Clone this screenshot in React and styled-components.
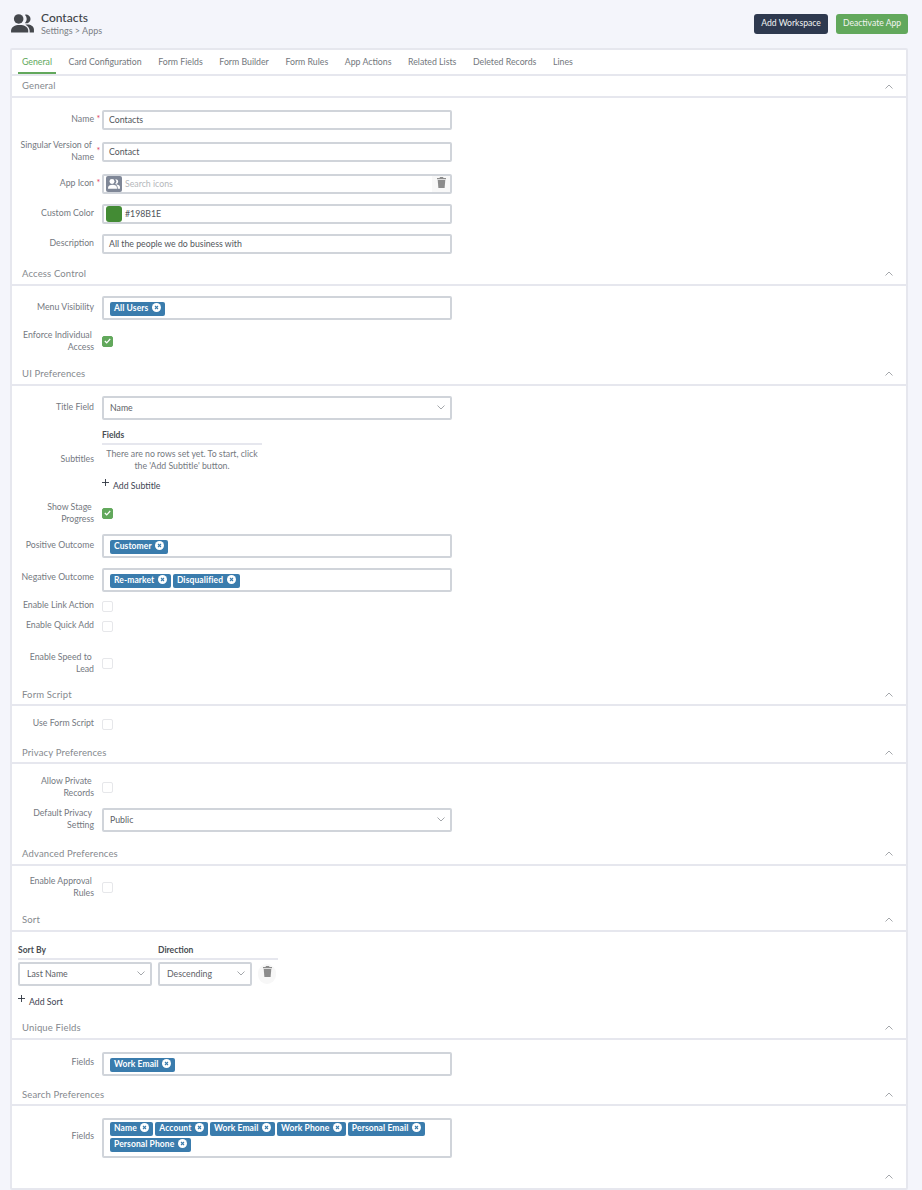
import React from "react";
import styled, { createGlobalStyle } from "styled-components";

const Global = createGlobalStyle`
  html, body { margin: 0; padding: 0; background: #f4f5fb; }
  body { font-family: "Lato", "Open Sans", sans-serif; font-size: 8.75px; color: #666a70; }
  * { box-sizing: border-box; }
`;

const Page = styled.div`
  width: 922px;
  height: 1190px;
  overflow: hidden;
  padding-left: 10px;
`;
const TopBar = styled.header`
  height: 48px;
  width: 898px;
  display: flex;
  align-items: flex-start;
  justify-content: space-between;
  padding-top: 14px;
`;
const TitleWrap = styled.div`
  display: flex;
  align-items: flex-start;
  gap: 7px;
  padding-left: 1px;
`;
const TitleText = styled.div`
  display: flex;
  flex-direction: column;
`;
const Title = styled.div`
  font-size: 12px;
  line-height: 10px;
  margin-top: -1px;
  color: #3e4348;
  font-weight: 500;
`;
const Crumbs = styled.div`
  font-size: 9px;
  line-height: 12px;
  margin-top: 2px;
  color: #7b7f85;
`;
const Actions = styled.div`
  display: flex;
  gap: 8px;
`;
const Button = styled.button`
  height: 20px;
  width: ${(p) => p.$w}px;
  padding: 0 0 2px;
  border: 0;
  border-radius: 3px;
  font: inherit;
  font-size: 8.6px;
  color: #f2f4f2;
  background: ${(p) => p.$bg};
`;
const Card = styled.main`
  width: 898px;
  height: 1142px;
  background: #fff;
  border: 2px solid #e6e7ee;
  border-radius: 2px;
`;
const Tabs = styled.nav`
  height: 26px;
  padding-left: 6px;
  display: flex;
  gap: 8.6px;
  border-bottom: 2px solid #e6e7ee;
`;
const Tab = styled.div`
  height: 24px;
  padding: 0 4px;
  line-height: 23px;
  color: ${(p) => (p.$active ? "#62a85c" : "#73777d")};
  border-bottom: ${(p) => (p.$active ? "2px solid #62a85c" : "0")};
`;
const SectionHead = styled.div`
  height: ${(p) => p.$h + 2}px;
  padding: 0 13px 0 10px;
  border-bottom: 2px solid #e6e7ee;
  display: flex;
  align-items: center;
  justify-content: space-between;
`;
const SectionTitle = styled.span`
  font-size: 9.5px;
  color: #85898e;
  letter-spacing: 0.15px;
  margin-top: ${(p) => (p.$tight ? -2 : 0)}px;
`;
const Body = styled.section`
  padding-top: ${(p) => p.$pt}px;
  padding-bottom: ${(p) => p.$pb}px;
`;
const Row = styled.div`
  display: flex;
  align-items: center;
  margin-top: ${(p) => p.$mt || 0}px;
  height: ${(p) => p.$h}px;
  padding-left: 6px;
`;
const Label = styled.label`
  width: 76px;
  flex: none;
  text-align: right;
  line-height: 12px;
  color: #75797f;
  transform: translateY(-${(p) => p.$up ?? 1}px);
  white-space: nowrap;
`;
const Gutter = styled.span`
  width: 8px;
  flex: none;
  text-align: center;
  color: #e0455f;
  font-size: 9px;
  line-height: 9px;
  padding-left: 1px;
  transform: translateY(-2px);
`;
const Input = styled.div`
  width: 350px;
  height: 20px;
  border: 2px solid #d0d4da;
  border-radius: 2px;
  background: #fff;
  display: flex;
  align-items: center;
  padding: 0 0 2px 5px;
  color: #52565c;
  position: relative;
`;
const Placeholder = styled.span`
  color: #b4b7bb;
  margin-left: 3px;
`;
const Value = styled.span`
  margin-left: ${(p) => p.$ml || 0}px;
  color: #52565c;
`;
const IconBox = styled.span`
  width: 16px;
  height: 16px;
  margin: 2px 0 0 -3px;
  border-radius: 2px;
  background: #7f8797;
  display: flex;
  align-items: center;
  justify-content: center;
`;
const Swatch = styled.span`
  width: 16px;
  height: 16px;
  margin: 2px 0 0 -3px;
  border-radius: 3px;
  background: #438b34;
`;
const TrashCap = styled.span`
  position: absolute;
  right: 0;
  top: 0;
  bottom: 0;
  width: 18px;
  background: #f8f8f8;
  display: flex;
  align-items: flex-start;
  justify-content: center;
  padding-top: 1px;
`;
const ChipBox = styled.div`
  width: 350px;
  height: ${(p) => p.$h || 24}px;
  border: 2px solid #d0d4da;
  border-radius: 2px;
  padding: ${(p) => (p.$multi ? 2 : 4)}px 6px 0;
  display: flex;
  flex-wrap: wrap;
  gap: 2px;
  align-content: flex-start;
`;
const Chip = styled.span`
  height: 14px;
  border-radius: 2px;
  background: #3a7cad;
  color: #fff;
  font-weight: 700;
  font-size: 8.5px;
  line-height: 12px;
  display: inline-flex;
  align-items: flex-start;
  padding: 0 4px;
  gap: 3.5px;
  letter-spacing: 0.1px;
`;
const ChipX = styled.svg`
  flex: none;
  margin-top: 1px;
`;
const Select = styled.div`
  width: ${(p) => p.$w || 350}px;
  height: 24px;
  border: 2px solid #d0d4da;
  border-radius: 2px;
  display: flex;
  align-items: center;
  justify-content: space-between;
  padding: 0 5px 1px ${(p) => p.$pl || 6}px;
  color: #5d6167;
`;
const Check = styled.span`
  width: 11px;
  height: 11px;
  border-radius: 2px;
  flex: none;
  margin-left: 8px;
  background: ${(p) => (p.$on ? "#62a85c" : "#fff")};
  border: 1px solid ${(p) => (p.$on ? "#62a85c" : "#e6e7ea")};
  display: flex;
  align-items: center;
  justify-content: center;
`;
const SubBlock = styled.div`
  width: 160px;
  margin-left: 8px;
  display: flex;
  flex-direction: column;
`;
const TableHead = styled.div`
  height: 17px;
  border-bottom: 2px solid #e6e7ee;
  font-weight: 700;
  font-size: 8.5px;
  line-height: 15px;
  color: #494d53;
`;
const Empty = styled.div`
  text-align: center;
  line-height: 12px;
  padding-top: 3px;
  color: #75797f;
`;
const AddLink = styled.div`
  display: flex;
  align-items: center;
  gap: 4px;
  height: 14px;
  margin-top: ${(p) => p.$mt}px;
  color: #3e4553;
`;
const PlusIcon = styled.svg`
  flex: none;
  transform: translateY(-3px);
`;
const SortWrap = styled.div`
  padding-left: 6px;
  width: 266px;
`;
const SortHead = styled.div`
  display: flex;
  height: 16px;
  width: 260px;
  margin-top: 12px;
  border-bottom: 2px solid #e6e7ee;
  font-weight: 700;
  font-size: 8.5px;
  line-height: 13px;
  color: #494d53;
`;
const SortCol = styled.span`
  width: ${(p) => p.$w}px;
`;
const SortRow = styled.div`
  display: flex;
  align-items: flex-start;
  gap: 6px;
  margin-top: 2px;
`;
const TrashRound = styled.span`
  width: 18px;
  height: 20px;
  margin-top: 2px;
  border-radius: 9px;
  background: #f7f7f7;
  display: flex;
  align-items: flex-start;
  justify-content: center;
  padding-top: 2px;
`;
const Foot = styled.div`
  height: 22px;
  padding: 0 13px 2px 0;
  display: flex;
  align-items: center;
  justify-content: flex-end;
`;

const People = ({ size = 23, color = "#45484d" }) => (
  <svg width={size} height={size * 0.83} viewBox="0 0 24 20" fill={color}>
    <circle cx="8" cy="5.2" r="5" />
    <path d="M14.5.8a4.6 4.6 0 1 1 0 8.8 6 6 0 0 0 0-8.8z" />
    <path d="M0 19.5v-2C0 13.5 4 11.5 9 11.5s9 2 9 6v2z" />
    <path d="M15 11.2c5-.8 9 1.5 9 5v3.3h-4.5v-2c0-2.6-2-5-4.5-6.3z" />
  </svg>
);
const Chevron = ({ up, color = "#8d9196", w = 8 }) => (
  <svg width={w} height={5} viewBox="0 0 8 5" fill="none" stroke={color} strokeWidth="0.8">
    <path d={up ? "M.5 4.5 4 1l3.5 3.5" : "M.5.5 4 4 7.5.5"} />
  </svg>
);
const Trash = () => (
  <svg width="9" height="11" viewBox="0 0 9 11" fill="#8c8c8c">
    <path d="M3 0h3l.5 1H9v1.2H0V1h2.5z" />
    <path d="M.7 3h7.6l-.7 8H1.4z" />
  </svg>
);
const Tick = () => (
  <svg width="7" height="6" viewBox="0 0 7 6" fill="none" stroke="#fff" strokeWidth="1.2">
    <path d="M.8 3 2.7 4.8 6.2 1" />
  </svg>
);
const Close = () => (
  <ChipX width="9" height="9" viewBox="0 0 9 9">
    <circle cx="4.5" cy="4.5" r="4.5" fill="#fff" />
    <path d="M3 3l3 3M6 3 3 6" stroke="#3a7cad" strokeWidth="1.1" />
  </ChipX>
);
const Plus = () => (
  <PlusIcon width="7" height="7" viewBox="0 0 7 7" stroke="#2e3440" strokeWidth="0.9">
    <path d="M3.5 0v7M0 3.5h7" />
  </PlusIcon>
);

const Head = ({ h, tight, children }) => (
  <SectionHead $h={h}>
    <SectionTitle $tight={tight}>{children}</SectionTitle>
    <Chevron up />
  </SectionHead>
);
const Chips = ({ items, h, multi }) => (
  <ChipBox $h={h} $multi={multi}>
    {items.map((c) => (
      <Chip key={c}>
        {c}
        <Close />
      </Chip>
    ))}
  </ChipBox>
);
const Lines = ({ a, b }) => (
  <>
    {a}
    {"\u00a0"}
    <br />
    {b}
  </>
);
const Star = () => <Gutter>*</Gutter>;

const tabs = ["General", "Card Configuration", "Form Fields", "Form Builder", "Form Rules", "App Actions", "Related Lists", "Deleted Records", "Lines"];

export default function App() {
  return (
    <Page>
      <Global />
      <TopBar>
        <TitleWrap>
          <People />
          <TitleText>
            <Title>Contacts</Title>
            <Crumbs>Settings &gt; Apps</Crumbs>
          </TitleText>
        </TitleWrap>
        <Actions>
          <Button $w={74} $bg="#2e394f">Add Workspace</Button>
          <Button $w={72} $bg="#62a85c">Deactivate App</Button>
        </Actions>
      </TopBar>
      <Card>
        <Tabs>
          {tabs.map((t, i) => (
            <Tab key={t} $active={i === 0}>{t}</Tab>
          ))}
        </Tabs>

        <Head h={20} tight>General</Head>
        <Body $pt={12} $pb={8}>
          <Row $h={20}>
            <Label>Name</Label><Star />
            <Input><Value>Contacts</Value></Input>
          </Row>
          <Row $h={20} $mt={12}>
            <Label><Lines a="Singular Version of" b="Name" /></Label><Star />
            <Input><Value>Contact</Value></Input>
          </Row>
          <Row $h={20} $mt={12}>
            <Label>App Icon</Label><Star />
            <Input>
              <IconBox><People size={12} color="#fff" /></IconBox>
              <Placeholder>Search icons</Placeholder>
              <TrashCap><Trash /></TrashCap>
            </Input>
          </Row>
          <Row $h={20} $mt={10}>
            <Label>Custom Color</Label><Gutter />
            <Input>
              <Swatch />
              <Value $ml={3}>#198B1E</Value>
            </Input>
          </Row>
          <Row $h={20} $mt={10}>
            <Label>Description</Label><Gutter />
            <Input><Value>All the people we do business with</Value></Input>
          </Row>
        </Body>

        <Head h={22}>Access Control</Head>
        <Body $pt={10} $pb={9}>
          <Row $h={24}>
            <Label>Menu Visibility</Label><Gutter />
            <Chips items={["All Users"]} />
          </Row>
          <Row $h={24} $mt={9}>
            <Label $up={0}><Lines a="Enforce Individual" b="Access" /></Label>
            <Check $on><Tick /></Check>
          </Row>
        </Body>

        <Head h={22}>UI Preferences</Head>
        <Body $pt={10} $pb={9}>
          <Row $h={24}>
            <Label>Title Field</Label><Gutter />
            <Select>Name<Chevron /></Select>
          </Row>
          <Row $h={62} $mt={9}>
            <Label $up={1}>Subtitles</Label>
            <SubBlock>
              <TableHead>Fields</TableHead>
              <Empty>There are no rows set yet. To start, click<br />the 'Add Subtitle' button.</Empty>
              <AddLink $mt={6}><Plus />Add Subtitle</AddLink>
            </SubBlock>
          </Row>
          <Row $h={24} $mt={10}>
            <Label $up={0}><Lines a="Show Stage" b="Progress" /></Label>
            <Check $on><Tick /></Check>
          </Row>
          <Row $h={24} $mt={9}>
            <Label>Positive Outcome</Label><Gutter />
            <Chips items={["Customer"]} />
          </Row>
          <Row $h={24} $mt={10}>
            <Label $up={3}>Negative Outcome</Label><Gutter />
            <Chips items={["Re-market", "Disqualified"]} />
          </Row>
          <Row $h={12} $mt={8}>
            <Label>Enable Link Action</Label>
            <Check />
          </Row>
          <Row $h={12} $mt={8}>
            <Label>Enable Quick Add</Label>
            <Check />
          </Row>
          <Row $h={24} $mt={19}>
            <Label $up={0}><Lines a="Enable Speed to" b="Lead" /></Label>
            <Check />
          </Row>
        </Body>

        <Head h={20}>Form Script</Head>
        <Body $pt={12} $pb={12}>
          <Row $h={12}>
            <Label>Use Form Script</Label>
            <Check />
          </Row>
        </Body>

        <Head h={20}>Privacy Preferences</Head>
        <Body $pt={11} $pb={10}>
          <Row $h={24}>
            <Label $up={0}><Lines a="Allow Private" b="Records" /></Label>
            <Check />
          </Row>
          <Row $h={24} $mt={9}>
            <Label><Lines a="Default Privacy" b="Setting" /></Label><Gutter />
            <Select>Public<Chevron /></Select>
          </Row>
        </Body>

        <Head h={22}>Advanced Preferences</Head>
        <Body $pt={9} $pb={9}>
          <Row $h={24}>
            <Label $up={0}><Lines a="Enable Approval" b="Rules" /></Label>
            <Check />
          </Row>
        </Body>

        <Head h={22}>Sort</Head>
        <Body $pt={0} $pb={8}>
          <SortWrap>
            <SortHead>
              <SortCol $w={140}>Sort By</SortCol>
              <SortCol $w={120}>Direction</SortCol>
            </SortHead>
            <SortRow>
              <Select $w={134} $pl={7}>Last Name<Chevron /></Select>
              <Select $w={94} $pl={7}>Descending<Chevron /></Select>
              <TrashRound><Trash /></TrashRound>
            </SortRow>
            <AddLink $mt={8}><Plus />Add Sort</AddLink>
          </SortWrap>
        </Body>

        <Head h={22}>Unique Fields</Head>
        <Body $pt={12} $pb={8}>
          <Row $h={24}>
            <Label $up={2}>Fields</Label><Gutter />
            <Chips items={["Work Email"]} />
          </Row>
        </Body>

        <Head h={20}>Search Preferences</Head>
        <Body $pt={12} $pb={8}>
          <Row $h={40}>
            <Label $up={2}>Fields</Label><Gutter />
            <Chips h={40} multi items={["Name", "Account", "Work Email", "Work Phone", "Personal Email", "Personal Phone"]} />
          </Row>
        </Body>
        <Foot><Chevron up /></Foot>
      </Card>
    </Page>
  );
}
